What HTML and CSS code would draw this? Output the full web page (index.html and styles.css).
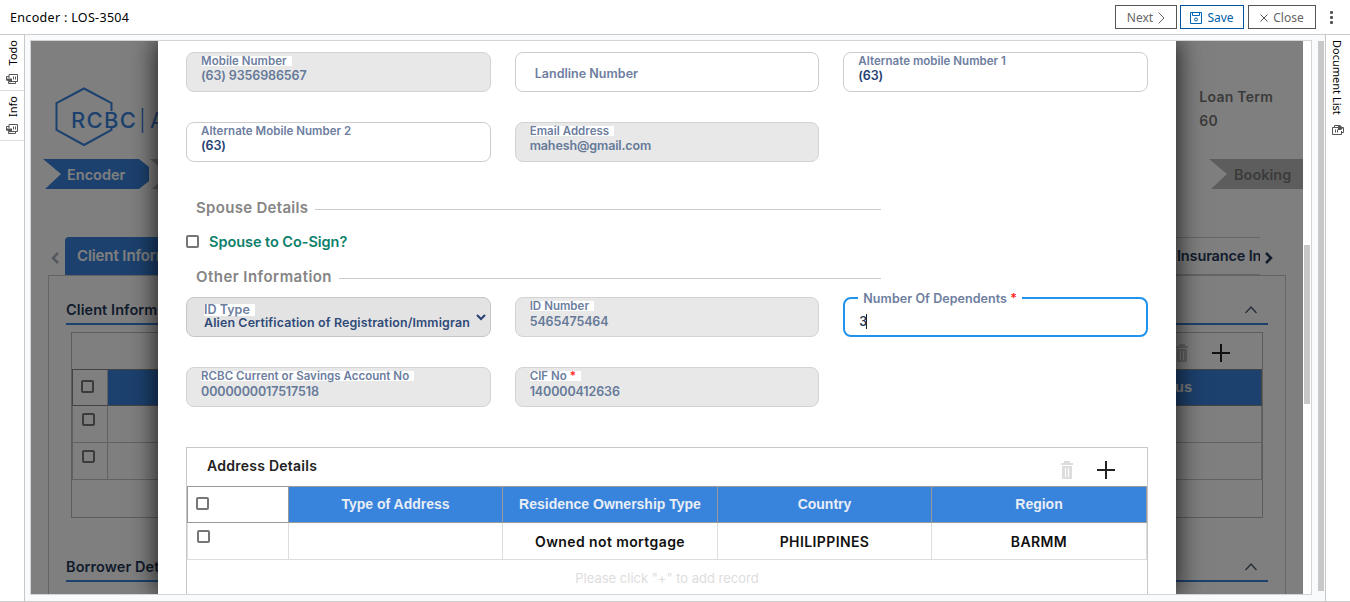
FILE: index.html
```html
<!DOCTYPE html>
<html lang="en">
<head>
<meta charset="utf-8">
<title>Encoder : LOS-3504</title>
<link rel="stylesheet" href="styles.css">
</head>
<body>
<svg class="defs" width="0" height="0">
  <symbol id="trash" viewBox="0 0 12 18"><path d="M3 0h6v2h3v2H0V2h3zM1 5h10v13H1z" fill="currentColor"/><path d="M4.500 7v9M7.500 7v9" stroke="#fff" stroke-width="1"/></symbol>
  <symbol id="plus" viewBox="0 0 18 18"><path d="M9 0v18M0 9h18" stroke="#222" stroke-width="2"/></symbol>
  <symbol id="up" viewBox="0 0 12 8"><path d="M.5 7 6 1l5.500 6" fill="none" stroke="#46576e" stroke-width="1.300"/></symbol>
  <symbol id="docs" viewBox="0 0 12 10"><path d="M3 4V.5h8.500v7H5M3 2.500H.5v4M2.500 7.500v2h7V8M7.500 2.500v3M9.500 2.500v3" fill="none" stroke="#555" stroke-width="1"/><path d="M1 4.500h5V7L4 8.500 1 6.500z" fill="#555"/></symbol>
  <symbol id="docs-down" viewBox="0 0 12 10"><path d="M7 2.500H.5v7h9V6M2.500 2V.5h6M9 2.500h2.500v5H10M3.500 4.500v3M5.500 4.500v3" fill="none" stroke="#555" stroke-width="1"/><path d="M6 1h3l2 2-2 2H6z" fill="#555"/></symbol>
</svg>
<header class="topbar">
  <h1 class="title">Encoder : LOS-3504</h1>
  <button class="btn next">Next <svg width="7" height="12" viewBox="0 0 7 12"><path d="M.5.5 6 6 .5 11.500" fill="none" stroke="#666"/></svg></button>
  <button class="btn save"><svg width="12" height="12" viewBox="0 0 12 12"><path d="M.5.5h11v11H.5zM2.500.5v3h7v-3" fill="none" stroke="#0067b8"/><circle cx="6" cy="7.500" r="1.500" fill="none" stroke="#0067b8"/></svg> Save</button>
  <button class="btn close"><svg width="8" height="8" viewBox="0 0 8 8"><path d="m.5.5 7 7m0-7-7 7" stroke="#555"/></svg> Close</button>
  <div class="kebab"><i></i><i></i><i></i></div>
</header>
<div class="shell">
  <aside class="rail left">
    <div class="railtab todo"><span>Todo</span><svg width="12" height="10"><use href="#docs"/></svg></div>
    <div class="railtab info"><span>Info</span><svg width="12" height="10"><use href="#docs"/></svg></div>
  </aside>
  <main class="stage">
    <div class="frame">
      <div class="page">
        <div class="brand">
          <svg width="104" height="62" viewBox="0 0 104 62"><path d="M56.500 24V16L29 1.500 1.500 16v27L29 58l27.500-15v-2" fill="none" stroke="#3883dc" stroke-width="2"/><path d="M87.500 21v25" stroke="#3883dc" stroke-width="1.500"/></svg>
          <span class="brandname">RCBC</span><span class="brandsub">A</span>
          <dl class="term"><dt>Loan Term</dt><dd>60</dd></dl>
        </div>
        <div class="steps">
          <div class="step on">Encoder</div><div class="step mid"></div><div class="step last">Booking</div>
        </div>
        <div class="tabs">
          <svg class="prev" width="8" height="12" viewBox="0 0 8 12"><path d="M7 1 2 6l5 5" fill="none" stroke="#a9b1bf" stroke-width="2.500"/></svg>
          <div class="tab on">Client Information</div>
          <div class="tab ins"><span>Insurance In</span></div>
          <svg class="nxt" width="8" height="12" viewBox="0 0 8 12"><path d="m1 1 5 5-5 5" fill="none" stroke="#253858" stroke-width="2.500"/></svg>
        </div>
        <section class="pane">
          <div class="sechead"><span>Client Information</span><svg width="12" height="8"><use href="#up"/></svg></div>
          <div class="bgtable">
            <div class="bgtools"><svg class="bin" width="12" height="18"><use href="#trash"/></svg><svg width="18" height="18"><use href="#plus"/></svg></div>
            <div class="bgrow head"><div><i class="box"></i></div><div>us</div></div>
            <div class="bgrow"><div><i class="box"></i></div><div></div></div>
            <div class="bgrow"><div><i class="box"></i></div><div></div></div>
          </div>
          <div class="sechead"><span>Borrower Details</span><svg width="12" height="8"><use href="#up"/></svg></div>
        </section>
      </div>
      <div class="scroll inner"><i></i></div>
      <div class="veil">
        <div class="modal">
          <div class="grid">
            <div class="field off"><label>Mobile Number</label><b>(63) 9356986567</b></div>
            <div class="field empty"><label>Landline Number</label></div>
            <div class="field"><label>Alternate mobile Number 1</label><b>(63)</b></div>
            <div class="field"><label>Alternate Mobile Number 2</label><b>(63)</b></div>
            <div class="field off"><label>Email Address</label><b>mahesh@gmail.com</b></div>
          </div>
          <div class="legend spouse">Spouse Details</div>
          <div class="check"><i class="box"></i><span>Spouse to Co-Sign?</span></div>
          <div class="legend other">Other Information</div>
          <div class="grid">
            <div class="field off select"><label>ID Type</label><b>Alien Certification of Registration/Immigran</b><svg width="10" height="7" viewBox="0 0 10 7"><path d="m1 1 4 4 4-4" fill="none" stroke="#253f73" stroke-width="2"/></svg></div>
            <div class="field off low"><label>ID Number</label><b>5465475464</b></div>
            <div class="field focus"><label>Number Of Dependents <em>*</em></label><b>3</b></div>
            <div class="field off low"><label>RCBC Current or Savings Account No</label><b>0000000017517518</b></div>
            <div class="field off low"><label>CIF No <em>*</em></label><b>140000412636</b></div>
          </div>
          <section class="address">
            <div class="addrhead"><h2>Address Details</h2><svg class="bin" width="12" height="18"><use href="#trash"/></svg><svg width="18" height="18"><use href="#plus"/></svg></div>
            <div class="row head"><div><i class="box"></i></div><div>Type of Address</div><div>Residence Ownership Type</div><div>Country</div><div>Region</div></div>
            <div class="row"><div><i class="box"></i></div><div></div><div>Owned not mortgage</div><div>PHILIPPINES</div><div>BARMM</div></div>
            <p class="hint">Please click "+" to add record</p>
          </section>
        </div>
      </div>
    </div>
    <div class="scroll outer"><i></i></div>
  </main>
  <aside class="rail right"><span>Document List</span><svg width="12" height="10"><use href="#docs-down"/></svg></aside>
</div>
</body>
</html>
```
FILE: styles.css
```css
* { box-sizing: border-box; }
body { margin: 0; width: 1350px; height: 602px; overflow: hidden; background: #fff; font-family: Inter, sans-serif; }
.defs { position: absolute; }
svg { display: block; flex: none; }
i { font-style: normal; }

.topbar { height: 35px; display: flex; align-items: center; border-bottom: 1px solid #ccc; padding: 0 17px 0 10px; font-family: "Noto Sans", sans-serif; }
.title { margin: 1px auto 0 0; font-size: 12.500px; font-weight: 400; line-height: 18px; letter-spacing: .32px; }
.btn { height: 24px; border: 1px solid #555; background: #fff; display: flex; align-items: center; justify-content: center; gap: 5px; font: 12px "Noto Sans", sans-serif; color: #666; padding: 1px 0 0; }
.next { width: 62px; margin-right: 3px; }
.save { width: 64px; margin-right: 4px; border-color: #00559e; color: #0060ab; }
.close { width: 68px; }
.kebab { display: flex; flex-direction: column; gap: 2px; margin-left: 14px; }
.kebab i { width: 3px; height: 3px; background: #555; border-radius: 1px; }

.shell { height: 567px; display: flex; border-bottom: 1px solid #ccc; }
.rail { font: 11px "Noto Sans", sans-serif; color: #000; flex: none; background: #fff; }
.rail span { writing-mode: vertical-rl; line-height: 16px; }
.left { width: 25px; border-right: 1px solid #c8c8c8; }
.railtab { border-bottom: 1px solid #ddd; display: flex; flex-direction: column; align-items: center; justify-content: space-between; padding: 5px 0 6px; }
.railtab span { transform: rotate(180deg); margin-left: 2px; }
.todo { height: 56px; }
.info { height: 50px; }
.right { width: 25px; border-left: 1px solid #c8c8c8; padding: 5px 0 0 3px; }
.right svg { margin: 7px 0 0 3px; }

.stage { flex: 1; background: #f8fafb; display: flex; padding: 5px 0 0 5px; }
.frame { position: relative; width: 1282px; height: 555px; border: 1px solid #d2d4d5; display: flex; overflow: hidden; background: #fff; }
.scroll i { display: block; background: #c8c8c8; }
.inner { width: 8px; padding: 204px 1px 0; }
.inner i { height: 159px; }
.outer { padding: 1px 0 0 6px; }
.outer i { width: 6px; height: 550px; }

.page { width: 1272px; height: 553px; overflow: hidden; flex: none; color: #253858; font-weight: 600; font-size: 15px; }
.brand { height: 118px; padding: 46px 0 0 24px; display: flex; align-items: flex-start; color: #3883dc; }
.brandname { width: 67px; font-size: 22px; font-weight: 500; line-height: 28px; margin: 19px 0 0 -88px; letter-spacing: 1.300px; }
.brandsub { font-size: 22px; font-weight: 400; line-height: 28px; margin: 19px 0 0 12px; }
.term { margin: 0 30px 0 auto; font-size: 14px; line-height: 24px; color: #777; letter-spacing: .25px; }
.term dd { margin: 0; }
.term dt { margin-top: -2px; }
.steps { display: flex; height: 30px; padding-left: 12px; }
.step { line-height: 31px; color: #777; background: #bbb; }
.step.on { width: 107px; color: #fff; padding-left: 24px; font-size: 14.500px; background: #3883dc; clip-path: polygon(0 0, 96px 0, 106px 8px, 106px 22px, 96px 30px, 2px 30px, 18px 15px); }
.step.mid { width: 60px; clip-path: polygon(0 0, 100% 0, 100% 100%, 2px 100%, 18px 15px); }
.step.last { margin-left: auto; width: 94px; padding-left: 25px; font-size: 14.500px; clip-path: polygon(0 0, 100% 0, 100% 100%, 2px 100%, 18px 15px); }
.tabs { display: flex; margin-top: 48px; height: 38px; padding-left: 20px; align-items: center; }
.tab { height: 38px; line-height: 38px; white-space: nowrap; overflow: hidden; }
.tab.on { margin-left: 6px; width: 180px; padding-left: 12px; color: #fff; background: #3883dc; border-radius: 4px 4px 0 0; letter-spacing: -.1px; }
.tab.ins { width: 1015px; border: 1px solid #ccc; border-width: 1px 0; font-size: 14.500px; line-height: 35px; }
.ins span { display: block; margin-left: 932px; letter-spacing: -.15px; }
.nxt { margin-left: 5px; }
.prev, .nxt { margin-top: 3px; }
.pane { margin-left: 17px; width: 1238px; height: 400px; border: 1px solid #ccc; border-top-color: #c4c4c4; padding: 21px 17px 0; }
.sechead { display: flex; justify-content: space-between; align-items: center; height: 28px; line-height: 26px; border-bottom: 2px solid #3883dc; padding: 0 11px 0 0; font-size: 14.500px; letter-spacing: .08px; }
.bgtable { margin: 7px 5px 36px 5px; height: 186px; border: 1px solid #bbb; }
.bgtools { height: 36px; display: flex; align-items: center; justify-content: flex-end; gap: 24px; padding: 4px 32px 0 0; }
.bin { color: #ddd; }
.bgtools .bin { color: #c8c8c8; }
.bgrow { display: grid; grid-template-columns: 34px 1fr; height: 37px; border: 1px solid #c4c4c4; border-top: 0; }
.bgrow > div { display: flex; align-items: flex-start; padding: 7px 0 0 9px; }
.bgrow > div:last-child { border-left: 1px solid #c4c4c4; }
.bgrow.head { border: 1px solid #888; }
.bgrow.head > div:last-child { padding-top: 8px; background: #3883dc; color: #fff; justify-content: flex-end; padding-right: 69px; font: bold 14.500px/18px "Liberation Sans", sans-serif; }
.bgrow.head > div:first-child { padding-left: 8px; padding-top: 10px; }
.box { display: block; width: 13px; height: 13px; border: 2px solid #767676; border-radius: 2px; background: #fff; flex: none; }

.veil { position: absolute; left: 0; top: 0; width: 1272px; height: 553px; background: rgba(0,0,0,.5); overflow: hidden; }
.modal { margin-left: 127px; width: 1018px; height: 553px; background: #fff; padding: 11px 28px 0; box-shadow: 0 0 24px 2px rgba(0,0,0,.75); }
.grid { display: grid; grid-template-columns: repeat(3, 1fr); gap: 30px 24px; }
.field { height: 40px; border: 1px solid #ccc; border-radius: 8px; padding: 3px 14px 0; color: #253f73; font-size: 13px; white-space: nowrap; display: flex; flex-direction: column; align-items: flex-start; }
.field label { font-size: 11.500px; line-height: 10px; font-weight: 600; color: #6d7e9f; padding-right: 5px; background: #fff; letter-spacing: .03px; }
.field b { font-weight: 600; line-height: 16px; margin-top: 2px; font-size: 12.500px; letter-spacing: -.12px; }
.field em { color: #f22; font-style: normal; }
.off { background: #e8e8e8; border-color: #d3d3d3; }
.off b { color: #667a98; }
.low b { margin-top: 3px; }
.empty { padding: 16px 19px 0; }
.empty label { font-size: 12.500px; }
.select { position: relative; padding: 6px 17px 0; background: #e3e3e3; border-color: #c6c6c6; }
.select label { font-size: 12.500px; line-height: 12px; }
.select b { color: #304a78; line-height: 14px; margin-top: 0; letter-spacing: .14px; font-size: 12.400px; }
.select svg { position: absolute; right: 4px; top: 16px; }
.focus { border: 2px solid #2293ec; padding: 0 0 0 15px; }
.focus label { position: relative; top: -7px; line-height: 14px; font-size: 12.500px; padding: 0 5px; margin-left: -2px; height: 14px; flex: none; letter-spacing: .05px; }
.focus b { color: #253858; border-right: 1px solid #222; line-height: 15px; margin-top: 1px; margin-left: -1px; letter-spacing: -1px; }
.legend { display: flex; align-items: center; gap: 7px; width: 695px; padding-left: 10px; line-height: 20px; font-size: 15px; font-weight: 600; color: #858585; }
.legend::after { content: ""; flex: 1; height: 1px; background: #ccc; margin-top: 2px; }
.spouse { margin-top: 36px; letter-spacing: .3px; }
.check { display: flex; align-items: center; gap: 10px; height: 20px; margin: 13px 0 16px; color: #0b806a; font-size: 14.500px; font-weight: 600; }
.check span { letter-spacing: -.05px; }
.other { margin-bottom: 10px; letter-spacing: .45px; }
.address { margin-top: 40px; height: 200px; border: 1px solid #c8c8c8; }
.addrhead { display: flex; height: 38px; padding: 0 32px 0 20px; gap: 24px; align-items: center; }
.addrhead svg { margin-top: 6px; }
.addrhead h2 { margin: -3px auto 0 0; font-size: 14px; font-weight: 600; color: #222; letter-spacing: .25px; }
.row { display: grid; grid-template-columns: 100px 214px 215px 214px 1fr; height: 37px; border: 1px solid #ddd; border-top: 0; font-size: 14px; font-weight: 600; color: #111; letter-spacing: .4px; }
.row > div { display: flex; justify-content: center; align-items: center; border-left: 1px solid #ddd; }
.row > div:first-child { border: 0; justify-content: flex-start; align-items: flex-start; padding: 7px 0 0 9px; }
.row.head { border: 1px solid #999; color: #e8eef6; font: bold 14px "Liberation Sans", sans-serif; letter-spacing: 0; }
.row.head > div { border-color: #999; background: #3883dc; padding-bottom: 2px; }
.row.head > div:first-child { background: #fff; padding: 10px 0 0 8px; }
.hint { margin: 9px 0 0; text-align: center; font-size: 13px; line-height: 18px; color: #ddd; }
```
